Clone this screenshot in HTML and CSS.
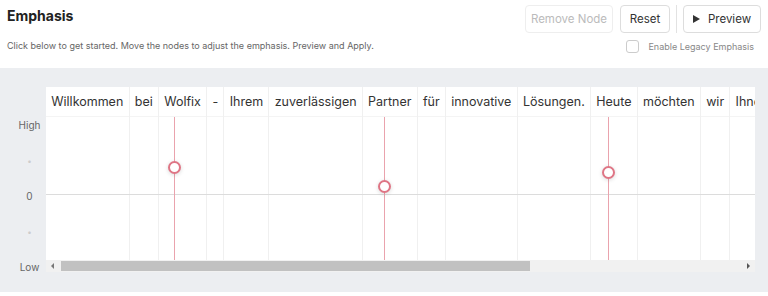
FILE: index.html
```html
<!DOCTYPE html>
<html lang="de">
<head>
  <meta charset="UTF-8">
  <meta name="viewport" content="width=device-width, initial-scale=1.0">
  <title>Emphasis</title>
  <link rel="stylesheet" href="styles.css">
</head>
<body>

  <div class="top">
    <div class="intro">
      <h1>Emphasis</h1>
      <p>Click below to get started. Move the nodes to adjust the emphasis. Preview and Apply.</p>
    </div>
    <div class="controls">
      <div class="buttons">
        <button class="btn disabled">Remove Node</button>
        <button class="btn reset">Reset</button>
        <span class="sep"></span>
        <button class="btn preview"><span class="play"></span>Preview</button>
      </div>
      <label class="legacy"><span class="box"></span>Enable Legacy Emphasis</label>
    </div>
  </div>

  <div class="panel">
    <div class="axis">
      <span>High</span>
      <span class="dot">•</span>
      <span>0</span>
      <span class="dot">•</span>
      <span>Low</span>
    </div>

    <div class="chart">
      <div class="track">
        <div class="cols">
          <div class="col"><div class="word">Willkommen</div></div>
          <div class="col"><div class="word">bei</div></div>
          <div class="col"><div class="word">Wolfix</div></div>
          <div class="col"><div class="word">-</div></div>
          <div class="col"><div class="word">Ihrem</div></div>
          <div class="col"><div class="word">zuverlässigen</div></div>
          <div class="col"><div class="word">Partner</div></div>
          <div class="col"><div class="word">für</div></div>
          <div class="col"><div class="word">innovative</div></div>
          <div class="col"><div class="word">Lösungen.</div></div>
          <div class="col"><div class="word">Heute</div></div>
          <div class="col"><div class="word">möchten</div></div>
          <div class="col"><div class="word">wir</div></div>
          <div class="col"><div class="word">Ihnen</div></div>
        </div>

        <div class="plot">
          <div class="zero"></div>
          <!-- nodes -->
          <div class="node" style="left: 128px; top: 50px;"></div>
          <div class="node" style="left: 338px; top: 69px;"></div>
          <div class="node" style="left: 562px; top: 55px;"></div>
        </div>
      </div>

      <div class="scrollbar">
        <span class="arrow left"></span>
        <div class="thumb"></div>
        <span class="arrow right"></span>
      </div>
    </div>
  </div>

</body>
</html>
```

FILE: styles.css
```css
body {
  margin: 0;
  background: #fff;
  color: #222;
  font-family: Inter, 'Noto Sans', sans-serif;
}

.top {
  display: flex;
  justify-content: space-between;
  padding: 5px 7px 0 7px;
  height: 63px;
}

h1 {
  margin: 2px 0 0 0;
  font-size: 14px;
  font-weight: 700;
  color: #222;
}

.intro p {
  margin: 16px 0 0 0;
  font-size: 9px;
  color: #666;
}

.controls {
  display: flex;
  flex-direction: column;
  align-items: flex-end;
}

.buttons {
  display: flex;
  align-items: center;
}

.btn {
  height: 28px;
  padding: 0;
  border: 1px solid #ddd;
  border-radius: 4px;
  background: #fff;
  font-family: inherit;
  font-size: 11.5px;
  color: #333;
  display: flex;
  align-items: center;
  justify-content: center;
  white-space: nowrap;
  margin-left: 7px;
}

.btn.disabled {
  color: #bbb;
  border-color: #eee;
  width: 88px;
}

.btn.reset {
  width: 50px;
}

.btn.preview {
  width: 78px;
  margin-left: 6px;
}

.sep {
  width: 1px;
  height: 28px;
  background: #e2e2e2;
  margin: 0 0 0 6px;
}

.play {
  width: 0;
  height: 0;
  border-left: 7px solid #333;
  border-top: 4px solid transparent;
  border-bottom: 4px solid transparent;
  margin: 0 8px 0 0;
}

.legacy {
  display: flex;
  align-items: center;
  margin-top: 7px;
  margin-right: 7px;
  font-size: 9px;
  color: #888;
}

.box {
  width: 11px;
  height: 11px;
  border: 1px solid #ccc;
  border-radius: 3px;
  margin-right: 9px;
}

.panel {
  display: flex;
  background: #eceef1;
  height: 224px;
  padding-top: 19px;
  box-sizing: border-box;
}

.axis {
  width: 33px;
  padding-left: 13px;
  margin-top: 31px;
  height: 156px;
  display: flex;
  flex-direction: column;
  justify-content: space-between;
  align-items: center;
  font-size: 10px;
  color: #666;
}

.axis span {
  line-height: 14px;
}

.axis .dot {
  color: #ccc;
  font-size: 8px;
}

.chart {
  width: 709px;
}

.track {
  position: relative;
  height: 173px;
  overflow: hidden;
  background: #fff;
}

.cols {
  display: flex;
  height: 100%;
}

.col {
  flex: none;
  border-right: 1px solid #f0f0f0;
}

.word {
  height: 30px;
  line-height: 30px;
  padding: 0 5.25px;
  font-size: 12.5px;
  color: #333;
  white-space: nowrap;
  border-bottom: 1px solid #f4f4f4;
  box-sizing: border-box;
}

.plot {
  position: absolute;
  left: 0;
  right: 0;
  top: 30px;
  bottom: 0;
  overflow: hidden;
}

.zero {
  position: absolute;
  left: 0;
  right: 0;
  top: 77px;
  height: 1px;
  background: #dcdcdc;
}

.node {
  position: absolute;
  width: 0;
  height: 0;
}

.node::before {
  content: '';
  position: absolute;
  left: 0;
  top: -200px;
  height: 500px;
  width: 1px;
  background: #eaa3ad;
}

.node::after {
  content: '';
  position: absolute;
  left: -6px;
  top: -6px;
  width: 9px;
  height: 9px;
  border: 2px solid #df7585;
  border-radius: 50%;
  background: #fff;
  box-shadow: 0 1px 4px rgba(0, 0, 0, 0.15);
}

.scrollbar {
  height: 12px;
  background: #f1f1f1;
  display: flex;
  align-items: center;
  padding: 0 5px;
}

.arrow {
  width: 0;
  height: 0;
  border-top: 3px solid transparent;
  border-bottom: 3px solid transparent;
}

.arrow.left {
  border-right: 3px solid #777;
  margin-right: 7px;
}

.arrow.right {
  border-left: 3px solid #555;
  margin-left: auto;
}

.thumb {
  width: 469px;
  height: 10px;
  background: #c1c1c1;
}
```
